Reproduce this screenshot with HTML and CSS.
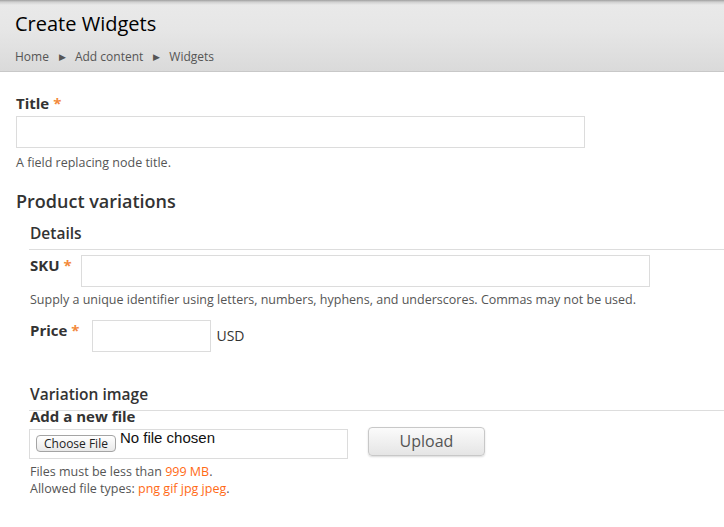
FILE: index.html
```html
<!DOCTYPE html>
<html>
<head>
<meta charset="utf-8">
<link rel="stylesheet" href="styles.css">
</head>
<body>
<header class="page-header">
  <h1 class="page-title">Create Widgets</h1>
  <nav class="breadcrumb">
    <span>Home</span><span class="sep">&#9654;</span><span>Add content</span><span class="sep">&#9654;</span><span>Widgets</span>
  </nav>
</header>
<main class="content">
  <div class="field">
    <label class="label">Title <span class="req">*</span></label>
    <div class="text-input title-input"></div>
    <div class="desc">A field replacing node title.</div>
  </div>

  <h2 class="section-title">Product variations</h2>
  <div class="variation">
    <h3 class="sub-title">Details</h3>
    <div class="rule"></div>
    <div class="inline-field sku-row">
      <label class="label">SKU <span class="req">*</span></label>
      <div class="text-input sku-input"></div>
    </div>
    <div class="desc sku-desc">Supply a unique identifier using letters, numbers, hyphens, and underscores. Commas may not be used.</div>
    <div class="inline-field price-row">
      <label class="label">Price <span class="req">*</span></label>
      <div class="text-input price-input"></div>
      <span class="suffix">USD</span>
    </div>

    <h3 class="sub-title image-title">Variation image</h3>
    <div class="rule image-rule"></div>
    <div class="label add-file">Add a new file</div>
    <div class="upload-row">
      <div class="file-box">
        <span class="choose-btn">Choose File</span>
        <span class="no-file">No file chosen</span>
      </div>
      <span class="upload-btn">Upload</span>
    </div>
    <div class="desc file-desc">Files must be less than <span class="hl">999 MB</span>.<br>Allowed file types: <span class="hl">png gif jpg jpeg</span>.</div>
  </div>
</main>
</body>
</html>
```
FILE: styles.css
```css
html, body {
  margin: 0;
  padding: 0;
  background: #fff;
  font-family: "Open Sans", "Liberation Sans", sans-serif;
  color: #333;
}
.page-header {
  height: 72px;
  box-sizing: border-box;
  padding: 10px 15px 0;
  background: linear-gradient(to bottom, #9e9e9e 0px, #cfcfcf 2px, #e9e9e9 5px, #e6e6e6 30px, #dadada 71px);
  border-bottom: 1px solid #c8c8c8;
}
.page-title {
  margin: 0;
  font-size: 20px;
  font-weight: 400;
  line-height: 27px;
  color: #000;
}
.breadcrumb {
  margin-top: 12px;
  font-size: 12px;
  line-height: 16px;
  color: #555;
  display: flex;
  align-items: center;
}
.breadcrumb .sep {
  font-size: 9px;
  margin: 0 9px 0 10px;
  color: #555;
}
.content {
  padding: 21px 0 0 16px;
}
.label {
  font-weight: 700;
  font-size: 15px;
  line-height: 20px;
  color: #333;
  display: block;
}
.req {
  color: #f38a3c;
}
.text-input {
  box-sizing: border-box;
  border: 1px solid #dcdcdc;
  height: 32px;
  background: #fff;
}
.title-input {
  width: 569px;
  margin-top: 3px;
}
.desc {
  font-size: 12.5px;
  line-height: 17px;
  color: #555;
}
.field .desc {
  margin-top: 6px;
}
.section-title {
  margin: 18px 0 0;
  font-size: 18px;
  font-weight: 600;
  line-height: 24px;
  color: #333;
}
.variation {
  padding-left: 14px;
}
.sub-title {
  margin: 10px 0 0;
  font-size: 15.5px;
  font-weight: 600;
  line-height: 20px;
  color: #333;
}
.rule {
  height: 1px;
  background: #dddddd;
  margin-top: 6px;
  margin-left: -1px;
}
.inline-field {
  display: flex;
  align-items: flex-start;
}
.inline-field .label {
  padding-top: 0;
}
.sku-row {
  margin-top: 5px;
}
.sku-input {
  width: 569px;
  margin-left: 9px;
}
.sku-desc {
  margin-top: 4px;
}
.price-row {
  margin-top: 12px;
}
.price-input {
  width: 119px;
  margin-left: 13px;
  height: 32px;
}
.suffix {
  font-size: 14px;
  margin-left: 5px;
  padding-top: 6px;
  color: #333;
}
.image-title {
  margin-top: 32px;
}
.image-rule {
  margin-top: 6px;
}
.add-file {
  margin-top: -5px;
}
.upload-row {
  display: flex;
  align-items: flex-start;
  margin-top: 3px;
}
.file-box {
  box-sizing: border-box;
  width: 319px;
  height: 30px;
  border: 1px solid #dcdcdc;
  margin-left: -1px;
  padding: 5px 5px 0 6px;
  display: flex;
  align-items: flex-start;
}
.choose-btn {
  box-sizing: border-box;
  height: 17px;
  padding: 0 7px;
  font-size: 12px;
  line-height: 15px;
  color: #222;
  border: 1px solid #a4a4a4;
  border-radius: 4px;
  background: linear-gradient(to bottom, #ffffff, #e9e9e9);
  font-family: "Open Sans", "Liberation Sans", sans-serif;
}
.no-file {
  margin-left: 4px;
  margin-top: -6px;
  font-family: "Liberation Sans", Arial, sans-serif;
  font-size: 15px;
  line-height: 18px;
  color: #111;
}
.upload-btn {
  box-sizing: border-box;
  margin-left: 20px;
  margin-top: -2px;
  width: 117px;
  height: 29px;
  text-align: center;
  font-size: 16px;
  line-height: 27px;
  color: #555;
  border: 1px solid #c8c8c8;
  border-radius: 4px;
  background: linear-gradient(to bottom, #fbfbfb, #e5e5e5);
  box-shadow: 0 1px 2px rgba(0,0,0,0.15);
}
.file-desc {
  margin-top: 4px;
}
.hl {
  color: #ff6a16;
}
```
